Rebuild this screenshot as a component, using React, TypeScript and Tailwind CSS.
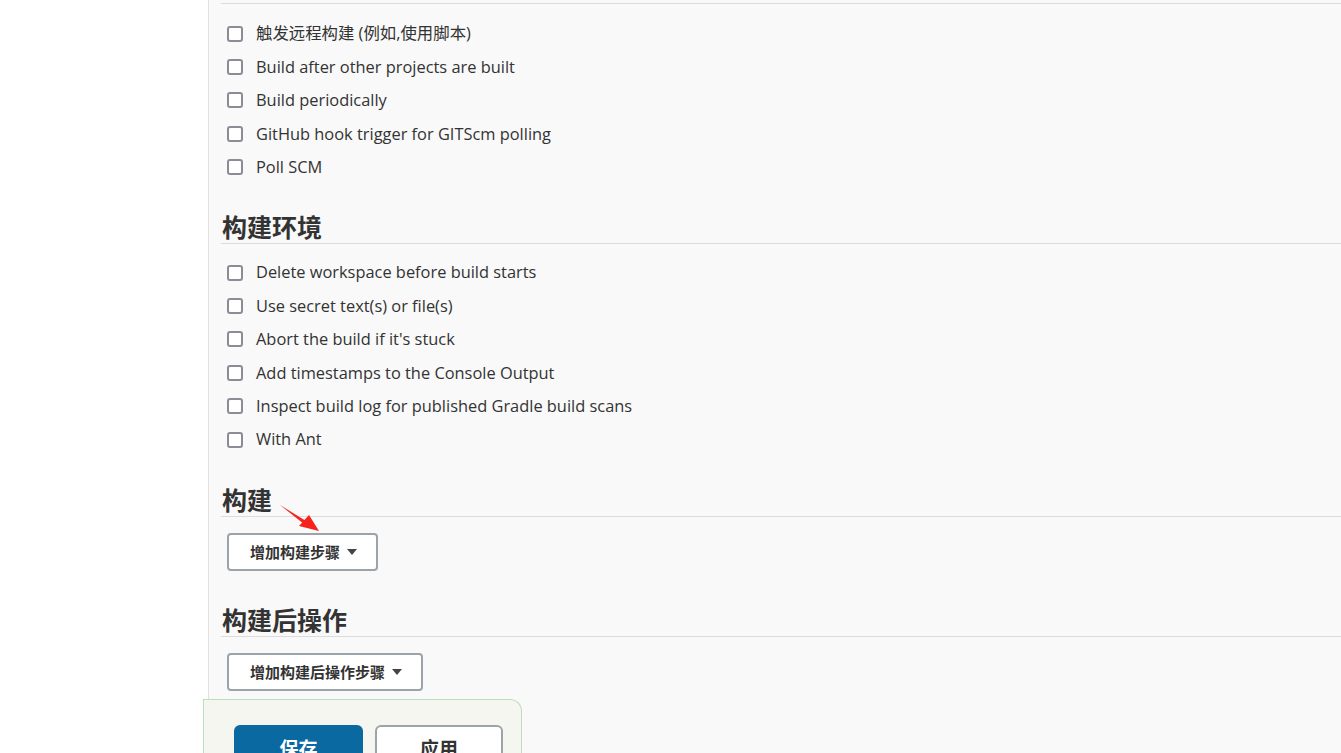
import React from "react";

const triggers = [
  "触发远程构建 (例如,使用脚本)",
  "Build after other projects are built",
  "Build periodically",
  "GitHub hook trigger for GITScm polling",
  "Poll SCM",
];

const envOptions = [
  "Delete workspace before build starts",
  "Use secret text(s) or file(s)",
  "Abort the build if it's stuck",
  "Add timestamps to the Console Output",
  "Inspect build log for published Gradle build scans",
  "With Ant",
];

const font = { fontFamily: '"Open Sans", "Noto Sans CJK SC", sans-serif' };

function CheckRow({ label }: { label: string }) {
  return (
    <label className="flex h-[33.4px] items-center pl-[6px]">
      <span className="h-[16px] w-[16px] shrink-0 rounded-[3px] border-2 border-[#8d8b95] bg-white" />
      <span className="ml-[13px] text-[16.4px] text-[#333]">{label}</span>
    </label>
  );
}

function SectionTitle({ title }: { title: string }) {
  return (
    <h2 className="h-[33px] border-b border-[#dcdcdc] pl-[1px] text-[25px] font-bold leading-[32px] text-[#333]">
      {title}
    </h2>
  );
}

function DropButton({ text }: { text: string }) {
  return (
    <button className="ml-[6px] flex h-[38px] items-center gap-[7px] rounded-[4px] border-2 border-[#9ba3ab] bg-white pl-[21px] pr-[19px] text-[15px] font-bold text-[#333]">
      {text}
      <svg width="10" height="6" viewBox="0 0 10 6">
        <path d="M0 0h10L5 6z" fill="#444" />
      </svg>
    </button>
  );
}

export default function App() {
  return (
    <div className="flex h-[753px] w-full overflow-hidden bg-white" style={font}>
      <div className="w-[209px] shrink-0 border-r border-[#e2e2e2] bg-white" />
      <div className="flex-1 bg-[#f9f9f9]">
        <div className="pl-[12px]">
          <div className="h-[4px] border-b border-[#dcdcdc]" />
          <div className="pt-[13px]">
            {triggers.map((t) => (
              <CheckRow key={t} label={t} />
            ))}
          </div>

          <div className="mt-[27px]">
            <SectionTitle title="构建环境" />
          </div>
          <div className="pt-[12px]">
            {envOptions.map((t) => (
              <CheckRow key={t} label={t} />
            ))}
          </div>

          <div className="relative mt-[28px]">
            <SectionTitle title="构建" />
            <svg
              className="absolute left-[58px] top-[19px]"
              width="42"
              height="30"
              viewBox="0 0 42 30"
            >
              <path d="M1 2 L27 18 L25 21 Z" fill="#f5231c" />
              <path d="M40 28 L20 23 L30 12 Z" fill="#f5231c" />
            </svg>
          </div>
          <div className="pt-[16px]">
            <DropButton text="增加构建步骤" />
          </div>

          <div className="mt-[33px]">
            <SectionTitle title="构建后操作" />
          </div>
          <div className="pt-[16px]">
            <DropButton text="增加构建后操作步骤" />
          </div>
        </div>

        <div className="ml-[-6px] mt-[8px] flex w-[319px] gap-[12px] rounded-tr-[12px] border border-b-0 border-[#bcdcc4] bg-[#f5f6ef] pl-[30px] pt-[25px] pb-[20px]">
          <button className="h-[48px] w-[129px] shrink-0 rounded-[6px] bg-[#0b69a2] text-[19px] font-bold text-white">
            保存
          </button>
          <button className="h-[48px] w-[128px] shrink-0 rounded-[6px] border-2 border-[#9ba3ab] bg-white text-[19px] font-bold text-[#333]">
            应用
          </button>
        </div>
      </div>
    </div>
  );
}
